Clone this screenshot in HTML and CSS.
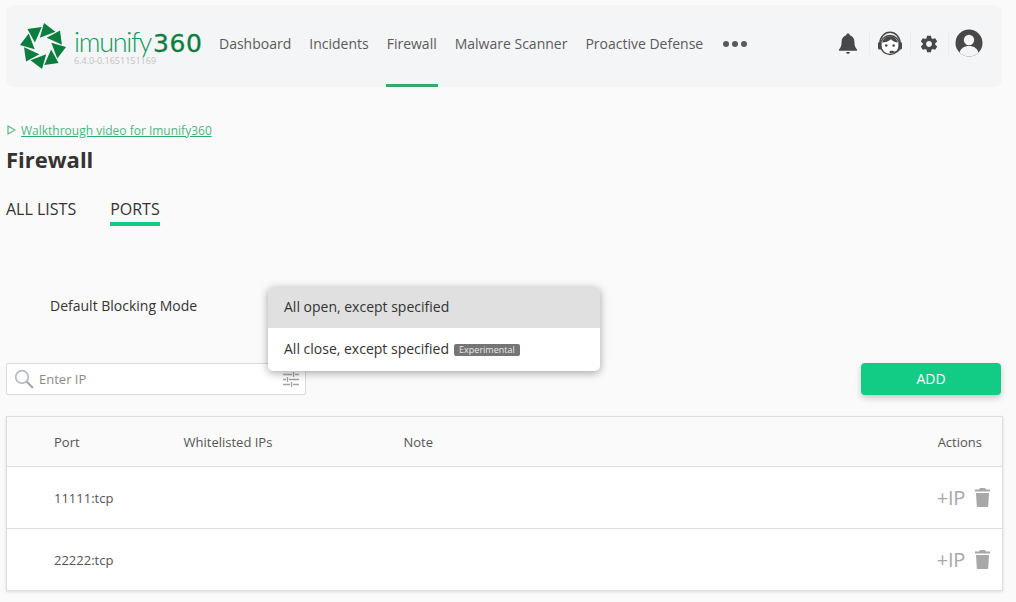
FILE: index.html
```html
<!DOCTYPE html>
<html lang="en">
<head>
    <meta charset="UTF-8">
    <title>Firewall - Imunify360</title>
    <link rel="stylesheet" href="styles.css">
</head>
<body>
    <header class="topbar">
        <div class="logo">
            <svg class="logo-mark" width="50" height="50" viewBox="-25 -25 50 50">
                <defs>
                    <path id="blade" d="M1 -23 L12.500 -14.300 L-3.200 -8.300 Z" fill="#0b7d3e"/>
                </defs>
                <use href="#blade"/>
                <use href="#blade" transform="rotate(45)"/>
                <use href="#blade" transform="rotate(90)"/>
                <use href="#blade" transform="rotate(135)"/>
                <use href="#blade" transform="rotate(180)"/>
                <use href="#blade" transform="rotate(225)"/>
                <use href="#blade" transform="rotate(270)"/>
                <use href="#blade" transform="rotate(315)"/>
            </svg>
            <div class="logo-text">
                <div class="logo-name"><span class="logo-light">imunify</span><span class="logo-num">360</span></div>
                <div class="logo-version">6.4.0-0.1651151169</div>
            </div>
        </div>
        <nav class="nav">
            <a class="nav-item">Dashboard</a>
            <a class="nav-item">Incidents</a>
            <a class="nav-item active">Firewall</a>
            <a class="nav-item">Malware Scanner</a>
            <a class="nav-item">Proactive Defense</a>
            <span class="nav-more"><i></i><i></i><i></i></span>
        </nav>
        <div class="tools">
            <span class="tool tool-bell">
                <svg width="20" height="22" viewBox="0 0 20 22">
                    <path d="M10 0.500c1 0 1.700.7 1.800 1.700 3 .8 4.600 3.400 4.600 6.600 0 3.600.8 6 2.600 7.700v1.200H1v-1.200c1.800-1.700 2.600-4.100 2.600-7.700 0-3.200 1.600-5.800 4.600-6.600.1-1 .8-1.700 1.800-1.700z" fill="#484848"/>
                    <path d="M8.200 19h3.600c0 1.100-.8 1.900-1.800 1.900s-1.800-.8-1.800-1.900z" fill="#484848"/>
                </svg>
            </span>
            <span class="tool tool-support">
                <svg width="26" height="26" viewBox="0 0 26 26">
                    <circle cx="13" cy="14" r="9.500" fill="#fff" stroke="#484848" stroke-width="1.400"/>
                    <path d="M2.800 13C2.800 6 7.500 1.300 13 1.300S23.200 6 23.200 13" fill="none" stroke="#484848" stroke-width="1.500"/>
                    <path d="M5 11.500C6.500 7 10 5.200 13 5.200s6.500 1.800 8 6.300c-2.800-.2-5.500-1.200-7-3.300C12 10.200 8.500 11.500 5 11.500z" fill="#484848"/>
                    <rect x="1" y="11" width="3.500" height="7.500" rx="1.500" fill="#484848"/>
                    <rect x="21.500" y="11" width="3.500" height="7.500" rx="1.500" fill="#484848"/>
                    <circle cx="9.300" cy="14.500" r="1.300" fill="#484848"/>
                    <circle cx="16.700" cy="14.500" r="1.300" fill="#484848"/>
                    <path d="M22.500 18c-.5 2-3 3-5.500 3" fill="none" stroke="#484848" stroke-width="1.100"/>
                    <rect x="12.500" y="19.800" width="4.500" height="2.400" rx="1.200" fill="#484848"/>
                </svg>
            </span>
            <span class="tool tool-gear">
                <svg width="20" height="20" viewBox="0 0 24 24">
                    <path fill="#484848" fill-rule="evenodd" d="M19.430 12.980c.04-.32.070-.64.070-.98s-.03-.66-.07-.98l2.110-1.650c.19-.15.240-.42.120-.64l-2-3.460c-.12-.22-.39-.3-.61-.22l-2.490 1c-.52-.4-1.080-.73-1.690-.98l-.38-2.650C14.460 2.180 14.250 2 14 2h-4c-.25 0-.46.18-.49.42l-.38 2.650c-.61.25-1.170.59-1.690.98l-2.490-1c-.23-.09-.49 0-.61.22l-2 3.460c-.13.22-.07.49.12.64l2.110 1.650c-.04.32-.07.65-.07.98s.03.66.07.98l-2.110 1.650c-.19.15-.24.42-.12.64l2 3.460c.12.22.39.3.61.22l2.490-1c.52.4 1.080.73 1.690.98l.38 2.650c.03.24.24.42.49.42h4c.25 0 .46-.18.49-.42l.38-2.650c.61-.25 1.170-.59 1.690-.98l2.490 1c.23.09.49 0 .61-.22l2-3.460c.12-.22.07-.49-.12-.64l-2.110-1.650zM12 15.500c-1.930 0-3.500-1.570-3.500-3.500s1.570-3.500 3.500-3.500 3.500 1.570 3.500 3.500-1.570 3.500-3.500 3.500z"/>
                </svg>
            </span>
            <span class="tool tool-user">
                <svg width="28" height="28" viewBox="0 0 28 28">
                    <circle cx="14" cy="14" r="13.500" fill="#484848"/>
                    <circle cx="14" cy="11" r="5.200" fill="#f4f5f7"/>
                    <path d="M4.500 23.500c1.500-4.500 5-6.500 9.500-6.500s8 2 9.500 6.500C21 26 17.500 27.500 14 27.500S7 26 4.500 23.500z" fill="#f4f5f7"/>
                </svg>
            </span>
        </div>
    </header>

    <main class="content">
        <a class="walkthrough">
            <svg width="9" height="10" viewBox="0 0 9 10"><path d="M1 1 L8 5 L1 9 Z" fill="none" stroke="#5cb98a" stroke-width="1.200"/></svg>
            <span>Walkthrough video for Imunify360</span>
        </a>
        <h1 class="title">Firewall</h1>
        <div class="tabs">
            <a class="tab">ALL LISTS</a>
            <a class="tab selected">PORTS</a>
        </div>

        <div class="mode-row">
            <label class="mode-label">Default Blocking Mode</label>
            <div class="mode-select">
                <div class="menu">
                    <div class="menu-item current">All open, except specified</div>
                    <div class="menu-item">All close, except specified <span class="badge">Experimental</span></div>
                </div>
            </div>
        </div>

        <div class="toolbar">
            <div class="search">
                <svg width="21" height="21" viewBox="0 0 21 21">
                    <circle cx="8" cy="8" r="6.300" fill="none" stroke="#b3bcc4" stroke-width="1.700"/>
                    <path d="M12.800 12.800 L19 19" stroke="#a9a9a9" stroke-width="2.200"/>
                </svg>
                <span class="search-text">Enter IP</span>
                <svg class="sliders" width="16" height="15" viewBox="0 0 16 15">
                    <path d="M0 2.500H9M12 2.500H16M0 7.500H3M6 7.500H16M0 12.500H7M10 12.500H16" stroke="#a3a3a3" stroke-width="1.300"/>
                    <path d="M10.500 0V5M4.500 5V10M8.500 10V15" stroke="#a3a3a3" stroke-width="1.300"/>
                </svg>
            </div>
            <button class="add-btn">ADD</button>
        </div>

        <table class="ports">
            <thead>
                <tr>
                    <th class="col-port">Port</th>
                    <th class="col-ips">Whitelisted IPs</th>
                    <th class="col-note">Note</th>
                    <th class="col-actions">Actions</th>
                </tr>
            </thead>
            <tbody>
                <tr>
                    <td class="col-port">11111:tcp</td>
                    <td></td>
                    <td></td>
                    <td class="col-actions">
                        <div class="row-actions">
                            <span class="add-ip">+IP</span>
                            <svg width="15" height="19" viewBox="0 0 15 19"><path d="M5 0h5l1 1.500h4v2H0v-2h4zM1 5h13l-.8 13c0 .6-.5 1-1 1H2.800c-.5 0-1-.4-1-1z" fill="#a8a8a8"/></svg>
                        </div>
                    </td>
                </tr>
                <tr>
                    <td class="col-port">22222:tcp</td>
                    <td></td>
                    <td></td>
                    <td class="col-actions">
                        <div class="row-actions">
                            <span class="add-ip">+IP</span>
                            <svg width="15" height="19" viewBox="0 0 15 19"><path d="M5 0h5l1 1.500h4v2H0v-2h4zM1 5h13l-.8 13c0 .6-.5 1-1 1H2.800c-.5 0-1-.4-1-1z" fill="#a8a8a8"/></svg>
                        </div>
                    </td>
                </tr>
            </tbody>
        </table>
    </main>
</body>
</html>
```

FILE: styles.css
```css
/* General */
html, body {
    height: 100%;
}

body {
    margin: 0;
    padding: 5px 13px 0 6px;
    box-sizing: border-box;
    background: #fafafa;
    color: #333;
    font-family: "Open Sans", sans-serif;
    font-size: 14px;
    overflow: hidden;
}

/* Top bar */
.topbar {
    display: flex;
    align-items: stretch;
    height: 82px;
    width: 996px;
    background: #f4f5f7;
    border-radius: 8px;
}

.logo {
    display: flex;
    align-items: center;
    width: 213px;
    padding-left: 12px;
    box-sizing: border-box;
}

.logo-mark {
    flex: none;
    margin-right: 6px;
}

.logo-text {
    margin-top: 5px;
}

.logo-name {
    display: flex;
    align-items: baseline;
    height: 22px;
    line-height: 22px;
    color: #0b7d3e;
    white-space: nowrap;
}

.logo-light {
    font-family: Lato, sans-serif;
    font-weight: 300;
    font-size: 27px;
    letter-spacing: -1.300px;
    color: #0f9a5a;
}

.logo-num {
    font-family: "DejaVu Sans", sans-serif;
    font-size: 25px;
    letter-spacing: 0.500px;
    margin-left: 2px;
    -webkit-text-stroke: 0.300px #0b7d3e;
}

.logo-version {
    font-size: 9px;
    line-height: 11px;
    margin-top: 2px;
    color: #c2c2c2;
}

.nav {
    display: flex;
    align-items: stretch;
    gap: 18px;
}

.nav-item {
    display: flex;
    align-items: center;
    padding-bottom: 5px;
    box-sizing: border-box;
    color: #5a5a5a;
    font-size: 14px;
    position: relative;
}

.nav-item.active::after {
    content: "";
    position: absolute;
    left: -1px;
    right: -1px;
    bottom: 0;
    height: 3px;
    background: #3aa76d;
}

.nav-more {
    display: flex;
    align-items: center;
    gap: 3px;
    padding-bottom: 4px;
    margin-left: 2px;
}

.nav-more i {
    width: 6px;
    height: 6px;
    border-radius: 50%;
    background: #5a5a5a;
}

.tools {
    display: flex;
    align-items: center;
    margin-left: auto;
    padding-bottom: 5px;
    padding-right: 19px;
}

.tool {
    display: flex;
    align-items: center;
    height: 23px;
}

.tool-bell {
    padding-right: 11px;
}

.tool-support {
    padding: 0 7px;
    border-left: 1px solid #ebecee;
}

.tool-gear {
    padding: 0 9px 0 8px;
    border-left: 1px solid #ebecee;
}

.tool-user {
    padding-left: 6px;
    border-left: 1px solid #ebecee;
}

.tool-user svg {
    margin-top: -2px;
}

/* Page content */
.content {
    position: relative;
    width: 997px;
}

.walkthrough {
    display: flex;
    align-items: center;
    gap: 5px;
    margin-top: 34px;
    padding-left: 1px;
    height: 18px;
    font-size: 12px;
    color: #4fb583;
}

.walkthrough span {
    text-decoration: underline;
    text-decoration-color: #28b06c;
}

.title {
    margin: 5px 0 0;
    font-size: 22px;
    line-height: 30px;
    font-weight: 700;
    color: #333;
}

/* Tabs */
.tabs {
    display: flex;
    gap: 34px;
    margin-top: 22px;
}

.tab {
    display: block;
    height: 30px;
    line-height: 26px;
    font-size: 16px;
    color: #333;
    box-sizing: border-box;
}

.tab.selected {
    border-bottom: 4px solid #12cc85;
}

/* Blocking mode */
.mode-row {
    display: flex;
    height: 84px;
    margin-top: 61px;
}

.mode-label {
    width: 262px;
    height: 37px;
    line-height: 37px;
    padding-left: 44px;
    box-sizing: border-box;
    color: #333;
}

.mode-select {
    position: relative;
    width: 332px;
}

.menu {
    position: absolute;
    z-index: 2;
    inset: 0;
    overflow: hidden;
    background: #fff;
    border-radius: 5px;
    box-shadow: 0 2px 8px rgba(0, 0, 0, 0.35);
}

.menu-item {
    display: flex;
    align-items: center;
    height: 42px;
    padding: 0 0 2px 16px;
    box-sizing: border-box;
    color: #333;
    white-space: pre;
}

.menu-item.current {
    height: 41px;
    background: #e0e0e0;
}

.badge {
    margin: 4px 0 0 1px;
    padding: 0 5.500px;
    height: 12px;
    line-height: 12px;
    font-size: 9px;
    color: #e8e8e8;
    background: #757575;
    border-radius: 2px;
}

/* Search + add */
.toolbar {
    display: flex;
    justify-content: space-between;
    align-items: flex-start;
    margin-top: -8px;
    padding-right: 2px;
}

.search {
    display: flex;
    align-items: center;
    width: 300px;
    height: 32px;
    padding: 0 6px 0 7px;
    box-sizing: border-box;
    background: #fff;
    border: 1px solid #d9d9d9;
    border-radius: 2px;
}

.search-text {
    margin-left: 4px;
    font-size: 13px;
    color: #8a8a8a;
}

.sliders {
    margin-left: auto;
}

.add-btn {
    width: 140px;
    height: 32px;
    padding: 0 0 2px;
    border: none;
    border-radius: 4px;
    background: #12cc85;
    color: #fff;
    font-family: "Open Sans", sans-serif;
    font-size: 14px;
    box-shadow: 0 3px 6px rgba(0, 0, 0, 0.2);
}

/* Ports table */
.ports {
    width: 997px;
    margin-top: 21px;
    border-collapse: collapse;
    background: #fff;
    table-layout: fixed;
    box-shadow: 0 1px 3px rgba(0, 0, 0, 0.12);
    font-size: 13px;
    color: #555;
}

.ports th {
    height: 49px;
    padding: 0;
    font-weight: 400;
    text-align: left;
    background: #fafafa;
    border: 1px solid #dedede;
    border-left: none;
    border-right: none;
}

.ports td {
    height: 61px;
    padding: 0;
    border-bottom: 1px solid #dedede;
}

.ports th:first-child, .ports td:first-child {
    border-left: 1px solid #dedede;
}

.ports th:last-child, .ports td:last-child {
    border-right: 1px solid #dedede;
}

.ports .col-port {
    width: 177px;
    padding-left: 47px;
    box-sizing: border-box;
}

.col-ips {
    width: 220px;
}

.col-actions {
    width: 150px;
}

.ports th.col-actions {
    text-align: right;
    padding-right: 20px;
}

.row-actions {
    display: flex;
    justify-content: flex-end;
    align-items: center;
    gap: 10px;
    padding-right: 12px;
}

.add-ip {
    font-size: 20px;
    line-height: 24px;
    font-weight: 400;
    letter-spacing: -0.300px;
    color: #a8a8a8;
}
```
